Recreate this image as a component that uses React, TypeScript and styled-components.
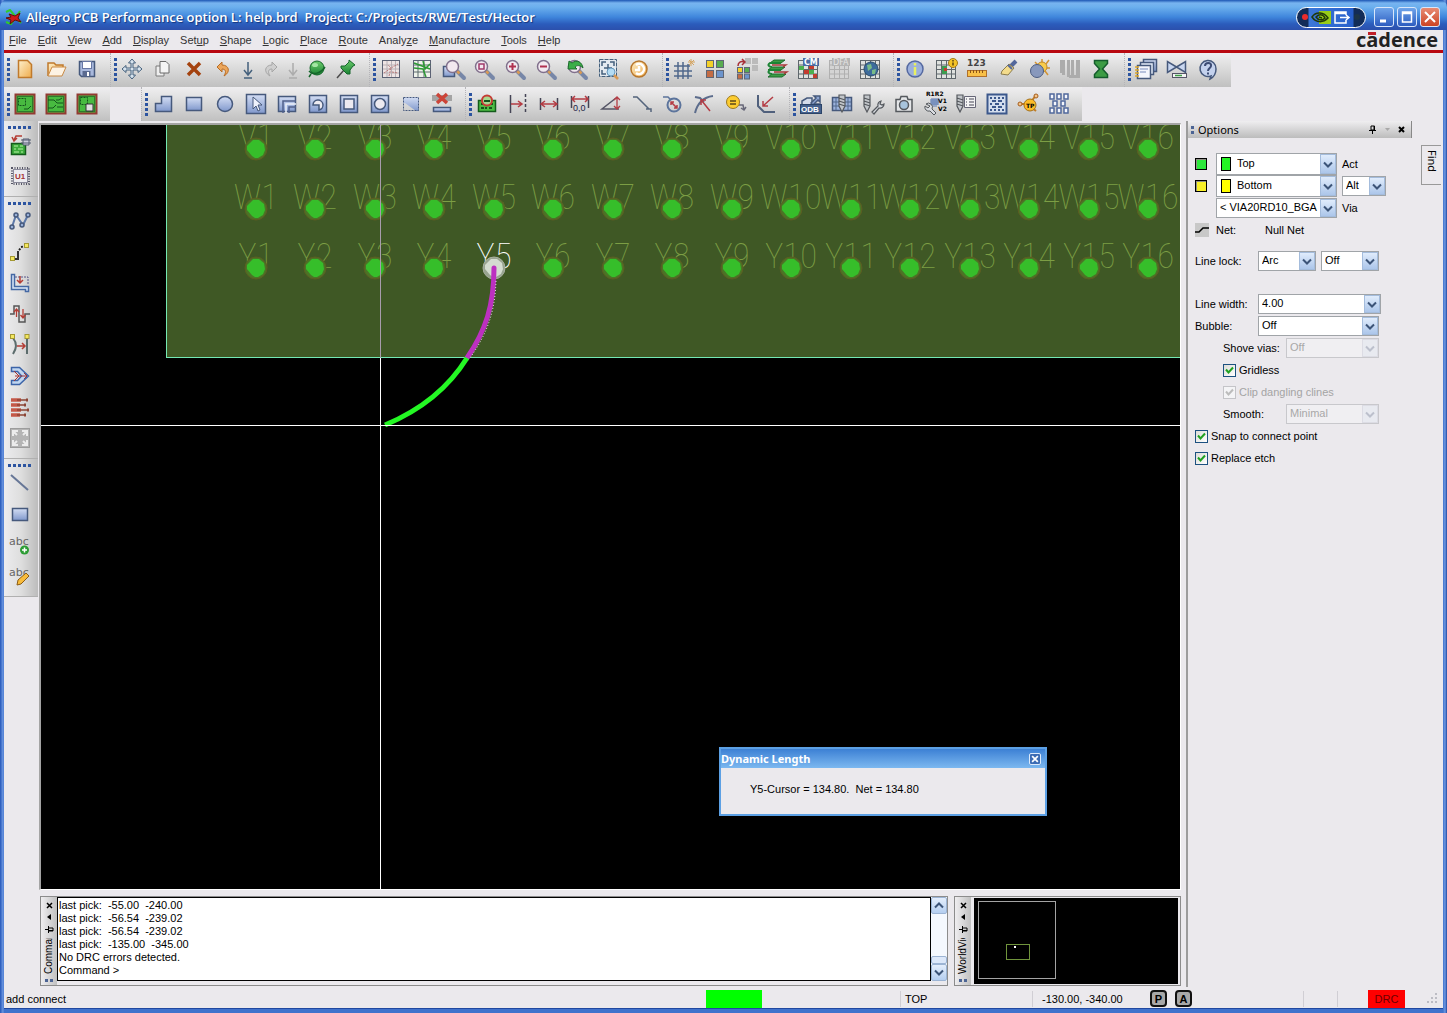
import React from "react";
import styled, { createGlobalStyle } from "styled-components";

const FACE = "#ebe9ed";
const INK = "#46597c";

const GlobalStyle = createGlobalStyle`
  * { box-sizing: border-box; }
  body { margin: 0; background: ${FACE}; font-family: "Liberation Sans", Arial, sans-serif; font-size: 11px; color: #000; }
  button, input, select, textarea { font: inherit; color: inherit; }
`;

/* ---------- icons ---------- */

const SharedPaints = styled.svg`
  display: block;
  width: 0;
  height: 0;
`;

const Glyph = styled.svg`
  display: block;
  width: 22px;
  height: 22px;
  overflow: visible;
`;

const line = (c = INK, w = 1.5) => ({ fill: "none", stroke: c, strokeWidth: w });
const box = (fill = "url(#blue)", c = INK) => ({ fill, stroke: c, strokeWidth: 1.5 });

const Lens = ({ children }: { children?: React.ReactNode }) => (
  <>
    <path d="M13 13l7 7" stroke="#7787a8" strokeWidth="4" strokeLinecap="round" />
    <path d="M13 13l2.500 2.500" stroke="#d99a54" strokeWidth="2.500" />
    <circle cx="8.500" cy="8.500" r="6" fill="#f2e9f0" stroke="#80708c" strokeWidth="1.500" />
    {children}
  </>
);
const Tile = ({ x, y, c, s = 7 }: { x: number; y: number; c: string; s?: number }) => (
  <rect x={x} y={y} width={s} height={s} fill={c} stroke="#5f6675" strokeWidth="1" />
);
const Sheet = ({ c = "#5f676c", bg = "#dfe2df" }: { c?: string; bg?: string }) => (
  <>
    <rect x="1.500" y="2.500" width="19" height="18" fill={bg} stroke={c} />
    <path d="M1.500 7h19M1.500 11.500h19M1.500 16h19M6.500 2v18M11.500 2v18M16.500 2v18" stroke={c} fill="none" />
  </>
);
const Board = ({ children }: { children?: React.ReactNode }) => (
  <>
    <rect x="1.500" y="1.500" width="19" height="19" fill="#48ba40" stroke="#923a32" strokeWidth="2" />
    <rect x="3.500" y="3.500" width="15" height="15" fill="none" stroke="#2c7c2c" />
    {children}
  </>
);
const Drill = ({ x = 8 }: { x?: number }) => (
  <path d={`M${x - 3} 2h6v11l-3 6l-3-6zM${x - 3} 5l6 2m-6 1l6 2m-6 1l6 2`} fill="#c2c6ca" stroke="#55595e" strokeWidth="1.200" />
);
const Wrench = () => (
  <path d="M10 19l6-6a4 4 0 0 1 3-5l-1 3l2 1l2-1a4 4 0 0 1-5 4l-5 6z" fill="#d8dbe0" stroke="#55595e" strokeWidth="1.200" />
);
const Abc = () => (
  <text x="0" y="11" fontSize="11" fill="#666" fontFamily="'DejaVu Sans', sans-serif">abc</text>
);

const ICONS: Record<string, React.ReactNode> = {
  newFile: <path d="M4.500 2.500h9l4 4v13h-13z" {...box("url(#orange)", "#c07a2c")} />,
  open: (
    <>
      <path d="M3 18V5h6l2 2h7v4" {...box("url(#orange)", "#c07a2c")} />
      <path d="M3 18l4-9h14l-4 9z" fill="#fdf3e4" stroke="#c98a45" />
    </>
  ),
  save: (
    <>
      <path d="M3.500 3.500h15v15h-13l-2-2z" {...box("#a8b8dc")} />
      <rect x="6.500" y="3.500" width="9" height="7" fill="#fff" stroke="#6878a4" />
      <rect x="6.500" y="13" width="8" height="5.500" fill="#5a6a90" />
      <rect x="11" y="14" width="2" height="4" fill="#fff" />
    </>
  ),
  move: (
    <path
      d="M11 1l3.500 4h-2.500v5h5V7.500l4 3.500l-4 3.500V12h-5v5h2.500L11 21l-3.500-4H10v-5H5v2.500L1 11l4-3.500V10h5V5H7.500z"
      fill="#d8e4ee" stroke="#44607c" strokeWidth="1"
    />
  ),
  copy: (
    <>
      <path d="M4 8h8v10H4z" fill="#eee" stroke="#7a7a7a" />
      <path d="M8 3.500h6l3 3v8.500H8z" fill="#f4f4f4" stroke="#6a6a6a" />
    </>
  ),
  del: <path d="M5 5l12 12M17 5L5 17" stroke="#a4420f" strokeWidth="3.500" />,
  undo: <path d="M5 9l5-5v3c7 0 9 7 2 11c3-5 1-7-2-7v3z" fill="#eca65a" stroke="#b86c24" />,
  down: <path d="M11 4v12M7 12l4 5l4-5M7 20h8" {...line("#44607c", 1.500)} />,
  redo: <path d="M17 9l-5-5v3c-7 0-9 7-2 11c-3-5-1-7 2-7v3z" fill="#cfcfcf" stroke="#a6a6a6" />,
  downOff: <path d="M11 5v11M7 12l4 5l4-5M7 20h8" {...line("#acacac", 1.500)} />,
  ball: (
    <>
      <circle cx="11" cy="10" r="7" fill="url(#green)" stroke="#14662a" />
      <path d="M3 13c4 5 12 2 16-4M5 16l-2 3" {...line("#14662a", 1.500)} />
      <ellipse cx="9" cy="7" rx="3" ry="2" fill="#a4e6a4" />
    </>
  ),
  pin: (
    <>
      <path d="M2 20l7-8" stroke="#4a4a4a" strokeWidth="1.500" />
      <path d="M14 2l6 5l-2 1l-3 4v4l-3 0l-6-6v-2h4l4-4z" fill="url(#green)" stroke="#14662a" />
    </>
  ),
  ratsOff: (
    <>
      <rect x="2.500" y="2.500" width="17" height="17" fill="#eee4e4" stroke="#5c6274" />
      <path d="M7 3v16M11.500 3v16M15.500 3v16M3 7h16M3 11h16M3 15h16" stroke="#b8b0b4" />
      <path d="M4 15l7-5l-3-3M9 18l2-8l7-4M12 14l6 1" stroke="#b87878" fill="none" strokeDasharray="2 1" />
    </>
  ),
  ratsOn: (
    <>
      <rect x="2.500" y="2.500" width="17" height="17" fill="#eef2ea" stroke="#5c6274" />
      <path d="M7 3v16M13 3v16M3 7h16M3 14h16" stroke="#5c6c6c" />
      <path d="M3 5l16 6M3 10l9 1l3 8M12 3l2 8l5-5" {...line("#2c9a34", 1.500)} />
    </>
  ),
  zoomBox: <><rect x="1.500" y="8.500" width="11" height="10" {...box()} /><g transform="translate(2 0)"><Lens /></g></>,
  zoomFit: <Lens><rect x="6" y="6" width="5" height="5" {...line("#a03a6a")} /></Lens>,
  zoomIn: <Lens><path d="M5 8.500h7M8.500 5v7" stroke="#b03050" strokeWidth="2" /></Lens>,
  zoomOut: <Lens><path d="M5 8.500h7" stroke="#b03050" strokeWidth="2" /></Lens>,
  zoomBack: <Lens><path d="M2 11l1-8l3 2c5-4 10-1 11 5c-3-3-6-3-8-1l2 2z" fill="#3cae48" stroke="#1c6c2c" /></Lens>,
  zoomWorld: (
    <>
      <rect x="2.500" y="1.500" width="17" height="17" fill="#e4eaf0" stroke="#44607c" strokeDasharray="4 1" />
      <path d="M5 8V4h4M13 4h4v4M5 12v4h4M11 6v8M7 10h8" {...line("#44607c")} />
      <circle cx="14" cy="14" r="4" fill="#b4dcf4" stroke="#6898bc" />
      <path d="M17 17l4 4" stroke="#d99a54" strokeWidth="2.500" />
    </>
  ),
  redraw: (
    <>
      <circle cx="11" cy="11" r="8" fill="url(#orange)" stroke="#b8772c" strokeWidth="1.500" />
      <path d="M8 7a5 5 0 1 1 0 8M11 8v4h-4" {...line("#fff", 2.500)} />
    </>
  ),
  grid: (
    <>
      <path d="M5 4v17M10 4v17M15 6v15M1 8h16M1 13h18M1 18h18" {...line("#50688c")} />
      <path d="M18 1v7M15 4h7M16 2l5 5M21 2l-5 5" stroke="#d4a460" strokeWidth="1" />
    </>
  ),
  colors: <><Tile x={2.500} y={2.500} c="#f4d028" /><Tile x={12.500} y={2.500} c="#58ac50" /><Tile x={2.500} y={12.500} c="#c46c44" /><Tile x={12.500} y={12.500} c="#6c94cc" /></>,
  shadow: (
    <>
      <rect x="10" y="0" width="6" height="6" fill="#bbb" /><rect x="17" y="0" width="6" height="6" fill="#bbb" /><rect x="17" y="7" width="6" height="6" fill="#bbb" />
      <Tile x={2.500} y={9.500} c="#f4d028" s={5} /><Tile x={9.500} y={9.500} c="#58ac50" s={5} />
      <Tile x={2.500} y={16} c="#c46c44" s={5} /><Tile x={9.500} y={16} c="#6c94cc" s={5} />
      <path d="M3 8c0-4 3-5 6-4M7 1l3 3l-3 3" {...line("#a83038")} />
    </>
  ),
  layers: (
    <>
      <path d="M2 19l4-3h14l-4 3zM2 12l4-3h13l-4 3zM4 5l4-3h11l-4 3z" fill="#3c9c44" stroke="#1c6c2c" />
      <path d="M15 5H4c-3 2-1 4 2 4M15 12H4c-3 2-1 4 2 4" {...line("#1c8434", 2)} />
      <path d="M6 7h14l-3 2M8 14h13l-3 2" {...line("#a83838", 1.300)} />
    </>
  ),
  cm: (
    <>
      <Sheet />
      <path d="M2 8h5v4H2zM12 12h5v4h-5z" fill="#4cb050" /><path d="M7 12h5v4H7zM16 16h4v4h-4zM12 8h5v3h-5z" fill="#c43c30" />
      <rect x="6" y="0" width="16" height="8" fill="#4c6ca4" />
      <text x="7" y="7" fontSize="8" fontWeight="700" fill="#fff" fontFamily="'DejaVu Sans', sans-serif">CM</text>
    </>
  ),
  dfa: (
    <>
      <Sheet c="#b0b0b0" bg="#d4d4d4" />
      <rect x="4" y="0" width="18" height="8" fill="#b4b4b4" />
      <text x="5" y="7" fontSize="8" fill="#e4e4e4" fontFamily="'DejaVu Sans', sans-serif">DFA</text>
    </>
  ),
  globe: (
    <>
      <Sheet />
      <circle cx="12" cy="11" r="7" fill="#3c6c9c" stroke="#284c6c" />
      <path d="M8 7l4-1l1 4l-4 3zM13 12l4-1l-1 5l-3 0z" fill="#78bc88" />
    </>
  ),
  info: (
    <>
      <circle cx="11" cy="11" r="8" fill="#9cb0dc" stroke="#5468a0" strokeWidth="1.500" />
      <path d="M11 9v8M11 5v2.500" stroke="#e8f060" strokeWidth="2.500" />
    </>
  ),
  sheetInfo: (
    <>
      <Sheet /><path d="M7 8h5v8H7z" fill="#3c9c50" /><path d="M9 10h3v3H9z" fill="#c43c30" />
      <circle cx="18" cy="5" r="4.500" fill="#f4c428" stroke="#a47818" /><path d="M18 4.500v3M18 2v1.500" stroke="#5c4410" strokeWidth="1.500" />
    </>
  ),
  measure: (
    <>
      <text x="1" y="8" fontSize="9" fontWeight="700" fill="#444" fontFamily="'DejaVu Sans', sans-serif">123</text>
      <rect x="1.500" y="12.500" width="19" height="6" fill="#f8c048" stroke="#b0702c" />
      <path d="M4.500 12v3M7.500 12v3M10.500 12v3M13.500 12v3M16.500 12v3" stroke="#8c5418" />
    </>
  ),
  brush: (
    <>
      <path d="M19 3l-6 6" stroke="#54689c" strokeWidth="4" />
      <path d="M12 6l5 4l-6 7l-7-1l1-3z" fill="#f4dc8c" stroke="#8c7c4c" /><path d="M11 7l4 4" stroke="#54689c" strokeWidth="2" />
    </>
  ),
  sun: (
    <>
      <path d="M14 1v4M21 2l-3 4M22 10h-4M20 17l-3-4M7 4l3 3" stroke="#d49434" strokeWidth="1.500" />
      <circle cx="14" cy="9" r="5" fill="#f8cc4c" stroke="#c08828" /><circle cx="9" cy="13" r="6.500" fill="#8898bc" stroke="#4c5c80" />
    </>
  ),
  bars: <path d="M1 2h5v15H3v-2H1zM8 2h3v17H8zM12 2h3v17h-3zM17 2h4v18H10v-3h7z" fill="#acacac" />,
  hourglass: <path d="M4.500 2.500h13v3l-5 5.500l5 5.500v3h-13v-3l5-5.500l-5-5.500z" fill="#3c9c44" stroke="#145c2c" strokeWidth="1.500" />,
  notes: (
    <>
      <rect x="8.500" y="1.500" width="13" height="12" {...box()} /><rect x="5.500" y="4.500" width="13" height="12" {...box("#e4ecf8")} />
      <rect x="2.500" y="7.500" width="13" height="13" {...box("#f4f6fc")} /><path d="M5 11h8M5 14h6" stroke="#788cbc" />
      <path d="M0 9h4M0 12h4M0 15h4M0 18h4" stroke="#e0a828" strokeWidth="1.500" />
    </>
  ),
  script: (
    <>
      <path d="M1.500 3.500v11l9-5.500l9 5.500V3.500L10.500 9z" {...box("#c8d6f0")} />
      <rect x="6.500" y="15.500" width="14" height="4" fill="#f4f4f4" stroke="#556" /><path d="M9 17.500h7" stroke="#3c9c44" strokeWidth="1.500" />
    </>
  ),
  help: (
    <>
      <path d="M14 18a8 8 0 1 1 5-7c0 5-2 8-6 10z" {...box("#c4d2ee")} />
      <path d="M8 8c0-4 7-4 6 0c0 2-3 2-3 5M11 14.500v2" {...line("#3c4c74", 2)} />
    </>
  ),
  board1: <Board><rect x="4.500" y="5.500" width="7" height="7" {...line("#14541c", 1)} strokeDasharray="2 1" /><path d="M10 16h4l3-3" {...line("#14541c", 1)} /></Board>,
  board2: <Board><path d="M3 7h6l3 3h6M3 15h5l3-3M11 7h3l3-2M12 14h6" {...line("#14541c", 1)} /></Board>,
  board3: <Board><rect x="4.500" y="4.500" width="7" height="7" {...line("#14541c", 1)} strokeDasharray="2 1" /><path d="M10 11h7v7h-7z" fill="#e0e0e0" stroke="#333" /></Board>,
  shPoly: <path d="M9.500 3.500h10v15h-16v-8h6z" {...box()} />,
  shRect: <rect x="3.500" y="4.500" width="15" height="13" {...box()} />,
  shCircle: <circle cx="11" cy="11" r="7.500" {...box()} />,
  shSelect: <><rect x="1.500" y="1.500" width="19" height="19" {...box()} /><path d="M8 4v12l3-3l2 5l2-1l-2-5h4z" fill="#eef2fc" stroke={INK} /></>,
  shEdge: <><path d="M2.500 3.500h17v15h-17z" {...box()} /><path d="M7 20V8h13M13 20v-6h7" {...line("#50608c", 1.500)} /><path d="M10 20v-9h10" {...line("#eef2fc", 1.500)} /></>,
  shVoid: <><rect x="2.500" y="2.500" width="17" height="17" {...box()} /><path d="M6 12a5 5 0 1 1 6 5v-5z" {...box("#eceaf0")} /></>,
  shVRect: <><rect x="2.500" y="2.500" width="17" height="17" {...box()} /><rect x="6" y="6" width="10" height="10" {...box("#eceaf0")} /></>,
  shVCircle: <><rect x="2.500" y="2.500" width="17" height="17" {...box()} /><circle cx="11" cy="11" r="5.500" {...box("#eceaf0")} /></>,
  shCorner: <><path d="M3 4h16v14h-3L5 10H3z" fill="url(#blue)" /><rect x="3.500" y="4.500" width="15" height="13" {...line(INK, 1)} strokeDasharray="2 1" /></>,
  shDelete: <><rect x="1" y="2" width="20" height="6" fill="#a4a4a4" /><path d="M6 1l10 9M16 1L6 10" stroke="#cc4438" strokeWidth="3.500" /><rect x="2.500" y="14.500" width="17" height="4" {...box()} /></>,
  drc: <><rect x="2.500" y="7.500" width="17" height="11" fill="#4cbc44" stroke="#145c1c" strokeWidth="1.500" /><path d="M5 15h3M9 15h2M13 15h3M5 11h2M15 11h2" stroke="#14541c" strokeWidth="2" /><circle cx="11" cy="7.500" r="5" fill="#a8d890" stroke="#c43c34" strokeWidth="2" /><path d="M8 8h6" stroke="#14541c" strokeWidth="2" /></>,
  dimA: <><path d="M3.500 2v18" {...line("#445", 1.500)} /><path d="M18.500 1v20" {...line("#445", 1.500)} strokeDasharray="3 2" /><path d="M4 11h11M11 8l4 3l-4 3" {...line("#b43c44", 1.500)} /></>,
  dimB: <><path d="M2.500 5v12M19.500 5v12" {...line("#445", 1.500)} /><path d="M3 11h16M7 8l-4 3l4 3M15 8l4 3l-4 3" {...line("#b43c44", 1.500)} /></>,
  dimC: <><path d="M2.500 3v12M19.500 3v12" {...line("#445", 1.500)} /><path d="M3 6h16M6 3l-3 3l3 3M16 3l3 3l-3 3" {...line("#b43c44", 1.500)} /><text x="4" y="18" fontSize="9" fill="#224" fontFamily="'Liberation Sans', sans-serif">0,0</text></>,
  dimD: <><path d="M19 16H2L16 5" {...line("#556", 1.500)} /><path d="M17 15V4M14 7l3-3l3 3M14 13l3 3l3-3" {...line("#b43c44", 1.300)} /></>,
  dimE: <path d="M2 4h4l12 12h2M15 16h5v3" {...line("#54647c", 1.500)} />,
  dimF: <><circle cx="12" cy="12" r="6.500" {...line("#5c749c", 2)} /><path d="M1 4h5l3 3" {...line("#5c749c", 1.500)} /><path d="M9 9l6 6M9 12V9h3M15 12v3h-3" {...line("#b43c44", 1.500)} /></>,
  dimG: <><path d="M2 20C5 8 12 4 20 3M2 4l5 1l4 4" {...line("#5c6c8c", 2)} /><path d="M17 18L9 8M8 12V7h5" {...line("#b43c44", 1.500)} /></>,
  dimH: <><circle cx="9" cy="9" r="6.500" fill="#fccc30" stroke="#9c7820" /><path d="M6 8h6M6 11h6" stroke="#5c4818" strokeWidth="1.500" /><path d="M15 12h4l1 5M17 15l3 2l2-3" {...line("#667", 1.500)} /></>,
  dimI: <><path d="M3 2v11l6 6h11" {...line("#50607c", 2)} /><path d="M18 4L8 13M8 8v5h5" {...line("#b43c44", 1.500)} /></>,
  odb: (
    <>
      <path d="M2 14V8l5-3h5v6h8v4z" {...box("#d4dcea")} /><path d="M11 10l5-5l-2-2h6v6l-2-2l-5 5z" {...box("#8ca4d0")} />
      <rect x="0.500" y="11.500" width="21" height="9" fill="#44608c" stroke="#2c4468" />
      <text x="1" y="19" fontSize="8" fontWeight="700" fill="#fff" fontFamily="'Liberation Sans', sans-serif">ODB</text>
    </>
  ),
  drillTable: <><rect x="1.500" y="4.500" width="19" height="13" {...box("#9cb2dc")} /><path d="M5 5v12M17 5v12M2 9h18M2 13h18" stroke="#50688c" /><Drill x={11} /></>,
  drillTool: <><Drill x={5} /><Wrench /></>,
  camera: <><path d="M3 6.500h4l1-3h6l1 3h4v12H3z" fill="#e4e6e8" stroke="#55595e" strokeWidth="1.500" /><circle cx="11" cy="12" r="4.500" fill="#a8c4dc" stroke="#55595e" strokeWidth="1.500" /></>,
  renum: (
    <>
      <path d="M6 7h9M6 9h9M6 11h8M8 5v9M10 5v9M12 5v9M14 5v7" stroke="#5878b4" />
      <path d="M2 11a4 4 0 0 1 6 5l4 4l-2 2l-4-4a4 4 0 0 1-5-5l3 2l2-2z" fill="#d8dbe0" stroke="#55595e" />
      <text x="2" y="3" fontSize="6" fontWeight="700" fontFamily="'DejaVu Sans', sans-serif">R1R2</text>
      <text x="14" y="10" fontSize="6" fontWeight="700" fontFamily="'DejaVu Sans', sans-serif">V1</text>
      <text x="14" y="18" fontSize="6" fontWeight="700" fontFamily="'DejaVu Sans', sans-serif">V2</text>
    </>
  ),
  drillList: <><Drill x={5} /><path d="M9.500 3.500h11v11h-11z" fill="#f4f4f4" stroke="#667" /><path d="M11 6h1M14 6h5M11 9h1M14 9h5M11 12h1M14 12h5" stroke="#445" /></>,
  matrix: (
    <>
      <rect x="1.500" y="1.500" width="19" height="19" fill="#d4deee" stroke="#3c588c" strokeWidth="2" />
      <path d="M4 5h2M8 5h2M12 5h2M16 5h2M6 8h4M12 8h4M4 11h2M9 11h4M16 11h2M6 14h4M12 14h4M4 17h2M8 17h2M12 17h2M16 17h2" {...line("#3c588c", 2)} />
    </>
  ),
  testPoint: (
    <>
      <path d="M3 11h5M14 9l5-7M14 14l5 4" {...line("#c07c24", 2)} /><circle cx="3" cy="11" r="2" fill="#f4c488" stroke="#a45c1c" /><circle cx="19" cy="3" r="2" fill="#f4c488" stroke="#a45c1c" />
      <circle cx="13" cy="12" r="6" fill="#fcbc28" stroke="#a4701c" />
      <text x="9" y="15" fontSize="6" fontWeight="700" fontFamily="'DejaVu Sans', sans-serif">TP</text>
    </>
  ),
  array: (
    <g fill="#f4f6fc" stroke="#50689c" strokeWidth="1.500">
      {[[2, 1], [9, 1], [16, 1], [5, 8], [13, 8], [2, 15], [9, 15], [16, 15]].map(([x, y]) => (
        <rect key={`${x}-${y}`} x={x} y={y} width="4" height="5" />
      ))}
    </g>
  ),
  placePart: <><rect x="2.500" y="9.500" width="14" height="11" fill="#3cac3c" stroke="#145c1c" strokeWidth="1.500" /><path d="M5 12h4M11 12h3M5 15h2M9 15h5M5 18h5M12 18h2" {...line("#b4f0a4", 1)} /><path d="M14 5h6v6h-6zM12 6h10M12 9h10" fill="#ccd" stroke="#555c70" /><path d="M13 2H7l-2 4M3 3l2 4l3-3" {...line("#b43c34", 1.500)} /></>,
  component: <><rect x="4.500" y="4.500" width="14" height="13" fill="#ececf0" stroke="#8c8c9c" /><rect x="3" y="3" width="17" height="16" fill="none" stroke="#556" strokeWidth="2" strokeDasharray="1 1.500" /><text x="6" y="14" fontSize="8" fontWeight="700" fill="#a43434" fontFamily="'Liberation Sans', sans-serif">U1</text></>,
  addConnect: <><path d="M3 17L7 5l7 10l5-10" {...line("#5c78a8", 2)} /><g {...box("#98b0d8")}><circle cx="3" cy="17" r="2" /><circle cx="7" cy="5" r="2" /><circle cx="13" cy="15" r="2" /><circle cx="19" cy="5" r="2" /></g></>,
  slide: <><path d="M5 18h4v-8" {...line("#333", 2)} /><path d="M10 9l2-2M12 6l5-1" {...line("#222", 2)} strokeDasharray="2 1.500" /><g fill="#f4e860" stroke="#a49834"><rect x="1.500" y="15.500" width="4" height="4" /><rect x="15.500" y="2.500" width="4" height="4" /></g></>,
  delay: <><path d="M2.500 2.500h3v12h14v5h-3v-2h-14z" {...box("#dce8f8", "#4468a4")} /><path d="M6 5h13v8" {...line("#558", 1)} strokeDasharray="2 1" /><path d="M11 4v7M8 8l3 3l3-3" {...line("#b43c34", 1.500)} /></>,
  phase: <><path d="M1 11h4V3h5v16h6v-8h5" {...line("#555", 1.500)} /><path d="M7.500 14V6M5 9l2.500-3L10 9M14 6v9M11.500 12l2.500 3l2.500-3" {...line("#b43c34", 1.300)} /></>,
  snap: <><path d="M4 4c4 5 4 10 0 16M18 4v16" {...line("#5c6c6c", 2)} /><path d="M8 12h8M13 9l3 3l-3 3" {...line("#b43c34", 1.500)} /><g fill="#f4e860" stroke="#a49834"><rect x="1.500" y="0.500" width="4" height="4" /><rect x="16" y="0.500" width="4" height="4" /></g></>,
  miter: <><path d="M2.500 2.500h8l9 8.500l-9 8.500h-8v-4h6l4-4.500l-4-4.500h-6z" {...box("#c0d6f0", "#3c64a8")} /><path d="M6 11h12M15 8l3 3l-3 3M5 6l5 5l-5 5" {...line("#a43434", 1)} /></>,
  fanout: <><path d="M2 4h10M2 9h9M2 14h10M2 19h9" stroke="#c45848" strokeWidth="3.500" /><path d="M8 4h11M8 9h9M8 14h12M8 19h9" stroke="#8c4434" strokeWidth="1.500" /><path d="M18 2.500v3M16 7.500v3M19 12.500v3M16 17.500v3" stroke="#8c4434" strokeWidth="2" /></>,
  expand: <><rect x="1.500" y="1.500" width="19" height="19" fill="#b4b4b4" stroke="#9c9c9c" /><path d="M4 9V4h5M13 4h5v5M18 13v5h-5M9 18H4v-5M5 5l3 3M17 5l-3 3M17 17l-3-3M5 17l3-3" {...line("#ececec", 2)} /></>,
  addLine: <path d="M2 3l17 15" {...line("#667696", 2)} />,
  addRect: <rect x="3.500" y="5.500" width="15" height="12" {...box()} />,
  addText: <><Abc /><circle cx="15.500" cy="16" r="4.500" fill="#2c9c34" /><path d="M13 16h5M15.500 13.500v5" stroke="#fff" strokeWidth="1.500" /></>,
  editText: <><Abc /><path d="M8 20l1-5l8-7l3 3l-8 8z" fill="#f8bc3c" stroke="#8c5c14" /></>,
};

const Icon = ({ name }: { name: string }) => (
  <Glyph viewBox="0 0 22 22" aria-hidden="true">{ICONS[name]}</Glyph>
);

/* ---------- window frame ---------- */

const Window = styled.div`
  display: flex;
  flex-direction: column;
  height: 100vh;
  min-height: 640px;
  padding: 0 4px 4px;
  background: linear-gradient(90deg, #2456b8 0, #6d98e2 3px, #4072cc 4px, #4072cc calc(100% - 4px), #6d98e2 calc(100% - 2px), #2048a0 100%);
`;

const TitleBar = styled.header`
  flex: none;
  display: flex;
  align-items: center;
  gap: 4px;
  height: 30px;
  margin: 0 -4px;
  padding: 4px 7px 0 5px;
  border-radius: 7px 7px 0 0;
  background: linear-gradient(#1c56b4 0, #78b4f0 3px, #6cb0ee 7px, #3f86dc 17px, #2b5cbc 24px, #2c50ac 100%);
`;

const AppTitle = styled.h1`
  flex: 1;
  margin: 0;
  white-space: pre;
  font: 600 13px/20px "Open Sans", "Noto Sans", sans-serif;
  color: #fff;
  text-shadow: 1px 1px 1px #14347c;
`;

const GpuPill = styled.div`
  display: flex;
  align-items: center;
  justify-content: space-between;
  width: 70px;
  height: 21px;
  margin-right: 5px;
  padding: 0 5px;
  border: 1px solid #fff;
  border-radius: 11px;
  background: linear-gradient(90deg, #122c58 11px, #3c78d8 12px, #2860cc 56px, #122c58 57px);
`;

const Lamp = styled.span<{ $on?: boolean }>`
  width: 6px;
  height: 6px;
  border-radius: 50%;
  background: ${(p) => (p.$on ? "#ec2c2c" : "#1c3448")};
`;

const PillButton = styled.button`
  display: grid;
  padding: 0;
  border: 0;
  background: none;
`;

const FrameButton = styled.button<{ $close?: boolean }>`
  display: grid;
  place-items: center;
  width: 20px;
  height: 20px;
  padding: 0;
  margin-left: -1px;
  border: 1px solid #d8e6fa;
  border-radius: 3px;
  background: ${(p) => (p.$close ? "linear-gradient(#e88c74, #cc4424)" : "linear-gradient(#6ea4ea, #2c5cc0)")};
`;

const MenuBar = styled.nav`
  flex: none;
  display: flex;
  align-items: center;
  gap: 11px;
  height: 23px;
  padding: 0 5px;
  border-bottom: 3px solid #b80810;
  background: ${FACE};
`;

const MenuItem = styled.button`
  padding: 0;
  border: 0;
  background: none;
  color: #333;
  line-height: 16px;
`;

const Brand = styled.span`
  margin-left: auto;
  font: bold 20px/20px "Open Sans", "Noto Sans", sans-serif;
  color: #222;
`;

const BrandA = styled.span`
  position: relative;
  &::after {
    content: "";
    position: absolute;
    left: 2px;
    top: 6px;
    width: 8px;
    height: 3px;
    background: #c02028;
  }
`;

/* ---------- toolbars ---------- */

const ToolRow = styled.div`
  flex: none;
  display: flex;
  height: 34px;
  background: ${FACE};
`;

const ToolGroup = styled.div<{ $first?: boolean; $gap?: boolean; $low?: boolean }>`
  display: flex;
  align-items: center;
  padding: ${(p) => (p.$low ? "0" : "0 0 2px")};
  padding-left: 5px;
  padding-right: 8px;
  margin-left: ${(p) => (p.$gap ? "31px" : "0")};
  border-left: ${(p) => (p.$first ? "0" : "1px dotted #b4b4b8")};
  background: linear-gradient(#efeef0 0, #e2e2e2 30%, #c0c0c0 100%);
`;

const Grip = styled.span<{ $flat?: boolean }>`
  flex: none;
  width: ${(p) => (p.$flat ? "24px" : "3px")};
  height: ${(p) => (p.$flat ? "3px" : "23px")};
  margin: ${(p) => (p.$flat ? "3px 0 0" : "0 -1px 0 -2px")};
  background: repeating-linear-gradient(${(p) => (p.$flat ? "90deg" : "180deg")}, #2c54a0 0 3px, transparent 3px 5px);
`;

const ToolButton = styled.button<{ $w: number }>`
  display: grid;
  place-items: center;
  width: ${(p) => p.$w}px;
  height: 31px;
  padding: 0;
  border: 0;
  background: none;
`;

const Work = styled.div`
  flex: 1;
  min-height: 0;
  display: flex;
  background: ${FACE};
`;

const SideTools = styled.div`
  flex: none;
  width: 34px;
`;

const SideGroup = styled.div`
  display: flex;
  flex-direction: column;
  align-items: center;
  padding: 2px 2px 5px 0;
  border-bottom: 1px solid #b0b0b0;
  background: linear-gradient(90deg, #ececee 0, #dedede 50%, #bcbcbc 100%);
`;

/* ---------- design canvas ---------- */

const Center = styled.main`
  flex: 1;
  min-width: 0;
  display: flex;
  flex-direction: column;
  padding: 2px 5px 1px 1px;
`;

const Canvas = styled.section`
  position: relative;
  flex: 1;
  min-height: 0;
  overflow: hidden;
  border: 2px solid #a4a4a4;
  border-bottom: 1px solid #fff;
  border-right: 1px solid #fff;
  background: #000;
`;

const Drawing = styled.svg`
  display: block;
  width: 100%;
  height: 100%;
`;

const PinName = styled.text<{ $lit?: boolean }>`
  font: 100 35px "Roboto Condensed", "Roboto", sans-serif;
  text-anchor: middle;
  fill: ${(p) => (p.$lit ? "#fff" : "#7c9e44")};
`;

const LengthDialog = styled.section`
  position: absolute;
  left: 678px;
  top: 622px;
  width: 328px;
  border: 2px solid #5ca0e4;
  background: ${FACE};
`;

const DialogTitle = styled.h2`
  display: flex;
  align-items: center;
  justify-content: space-between;
  height: 19px;
  margin: 0;
  padding-right: 4px;
  font: bold 11px/18px "Noto Sans", sans-serif;
  color: #fff;
  background: linear-gradient(#3c80d4, #7cb8f0);
`;

const DialogClose = styled.button`
  display: grid;
  place-items: center;
  width: 12px;
  height: 12px;
  padding: 0;
  border: 1px solid #dceafc;
  border-radius: 2px;
  background: #3c6cb4;
`;

const DialogText = styled.p`
  margin: 0;
  padding: 15px 29px 18px;
  line-height: 13px;
  white-space: pre;
`;

/* ---------- docked panes ---------- */

const Docks = styled.div`
  flex: none;
  display: flex;
  gap: 6px;
  height: 90px;
  margin: 6px 0 0 1px;
`;

const Dock = styled.section<{ $w?: number }>`
  display: flex;
  flex: ${(p) => (p.$w ? `0 0 ${p.$w}px` : "1")};
  min-width: 0;
  border: 1px solid #8c8c8c;
`;

const DockHandle = styled.div`
  flex: none;
  display: flex;
  flex-direction: column;
  align-items: center;
  justify-content: space-between;
  width: 16px;
  padding: 5px 0 3px;
  background: linear-gradient(90deg, #efeef0, #c0c0c0);
`;

const TinyButton = styled.button`
  display: grid;
  place-items: center;
  padding: 0;
  border: 0;
  background: none;
`;

const DockName = styled.span`
  height: 36px;
  overflow: hidden;
  writing-mode: vertical-rl;
  transform: rotate(180deg);
  font-size: 10px;
  line-height: 12px;
`;

const Dots = styled.span`
  width: 8px;
  height: 3px;
  background: repeating-linear-gradient(90deg, #4c6494 0 3px, transparent 3px 5px);
`;

const LogText = styled.textarea`
  flex: 1;
  min-width: 0;
  height: 84px;
  margin: 0;
  padding: 1px;
  resize: none;
  overflow: hidden;
  border: 1px solid #000;
  outline: 0;
  line-height: 13px;
  background: #fff;
`;

const ScrollTrack = styled.div`
  display: flex;
  flex-direction: column;
  width: 16px;
  height: 84px;
  background: #f4f8fe;
`;

const ScrollButton = styled.button`
  display: grid;
  place-items: center;
  height: 17px;
  padding: 0;
  border: 1px solid #9cb4d4;
  border-radius: 2px;
  background: linear-gradient(#e4eefc, #b4cef0);
`;

const ScrollThumb = styled.span`
  height: 8px;
  margin-top: auto;
  border: 1px solid #9cb4d4;
  border-radius: 2px;
  background: #dce8fa;
`;

const WorldMap = styled.div`
  flex: 1;
  margin: 1px 2px 1px 3px;
  background: #000;
`;

/* ---------- options panel ---------- */

const OptionsPanel = styled.aside`
  flex: none;
  display: flex;
  align-items: flex-start;
  width: 257px;
`;

const OptionsBody = styled.div`
  width: 226px;
  height: 100%;
  border-left: 2px solid #9c9c9c;
`;

const OptionsTitle = styled.h2`
  display: flex;
  align-items: center;
  gap: 8px;
  height: 17px;
  margin: 0 0 15px;
  padding: 0 6px 0 3px;
  border-right: 1px solid #888;
  font: 11px/15px "Noto Sans", sans-serif;
  background: linear-gradient(#efeef0, #bcbcbc);
`;

const TitleLabel = styled.span`
  flex: 1;
  margin-left: -4px;
`;

const SideDots = styled.span`
  width: 3px;
  height: 8px;
  background: repeating-linear-gradient(#4c6494 0 3px, transparent 3px 5px);
`;

const FindTab = styled.button`
  width: 20px;
  height: 40px;
  margin: 24px 0 0 9px;
  padding: 4px 2px;
  border: 1px solid #999;
  border-right: 0;
  background: ${FACE};
  writing-mode: vertical-rl;
  text-align: left;
  font-family: "Noto Sans", sans-serif;
  line-height: 12px;
`;

const Row = styled.div<{ $indent?: number; $top?: number }>`
  display: flex;
  align-items: center;
  height: 22px;
  margin-top: ${(p) => p.$top ?? 0}px;
  padding-left: ${(p) => p.$indent ?? 7}px;
`;

const Caption = styled.label<{ $w?: number; $off?: boolean }>`
  width: ${(p) => (p.$w ? `${p.$w}px` : "auto")};
  white-space: nowrap;
  color: ${(p) => (p.$off ? "#a4a4a4" : "#000")};
`;

const Combo = styled.span<{ $w: number; $gap?: number; $tall?: boolean }>`
  flex: none;
  display: grid;
  width: ${(p) => p.$w}px;
  height: ${(p) => (p.$tall ? 22 : 20)}px;
  margin-right: ${(p) => p.$gap ?? 5}px;
  align-items: center;
  > * { grid-area: 1 / 1; }
`;

const Field = styled.select<{ $pad?: number }>`
  appearance: none;
  width: 100%;
  height: 100%;
  padding: 0 0 2px ${(p) => p.$pad ?? 3}px;
  border: 1px solid #a0a4a8;
  border-radius: 0;
  background: #fff;
  opacity: 1;
  &:disabled { color: #a8a8a8; background: #f0eff2; border-color: #c8c8cc; }
`;

const Entry = styled.input`
  width: 100%;
  height: 100%;
  padding: 0 0 2px 3px;
  border: 1px solid #a0a4a8;
  background: #fff;
`;

const Arrow = styled.span<{ $off?: boolean }>`
  justify-self: end;
  display: grid;
  place-items: center;
  width: 16px;
  height: calc(100% - 2px);
  margin-right: 1px;
  border: 1px solid ${(p) => (p.$off ? "#dcdce4" : "#a4bcdc")};
  background: ${(p) => (p.$off ? "#e8eaf0" : "linear-gradient(#e0ecfc, #acc6ea)")};
  pointer-events: none;
`;

const Swatch = styled.span<{ $c: string }>`
  width: 10px;
  height: 14px;
  margin-left: 5px;
  border: 1px solid #000;
  background: ${(p) => p.$c};
  pointer-events: none;
`;

const LayerToggle = styled.button<{ $c: string }>`
  width: 12px;
  height: 12px;
  margin-right: 9px;
  padding: 0;
  border: 1px solid #000;
  box-shadow: inset 1px 1px 0 0 #909088;
  background: ${(p) => p.$c};
`;

const NetMark = styled.span`
  display: grid;
  width: 14px;
  height: 14px;
  margin-right: 7px;
  background: #c8c8c8;
`;

const TickHolder = styled.span`
  display: grid;
  width: 13px;
  height: 13px;
  margin-right: 3px;
  > * { grid-area: 1 / 1; }
`;

const TickInput = styled.input`
  appearance: none;
  width: 13px;
  height: 13px;
  margin: 0;
  border: 1px solid #1c5180;
  background: linear-gradient(135deg, #dcdcd7, #fff);
  &:disabled { border-color: #c4c4c8; background: #f4f4f6; }
`;

const TickMark = styled.svg`
  width: 13px;
  height: 13px;
  pointer-events: none;
`;

/* ---------- status bar ---------- */

const StatusBar = styled.footer`
  flex: none;
  display: grid;
  grid-template-columns: 1fr 56px 138px 132px 118px 25px 128px 34px 31px 37px 18px 19px;
  align-items: center;
  height: 22px;
  padding: 2px 1px 0 2px;
  background: ${FACE};
  border-bottom: 1px solid #2048a0;
  line-height: 18px;
`;

const StatusCell = styled.span<{ $pad?: number; $line?: boolean }>`
  height: 16px;
  line-height: 16px;
  padding-left: ${(p) => p.$pad ?? 0}px;
  border-left: ${(p) => (p.$line ? "1px solid #d0ced4" : "0")};
`;

const Busy = styled.span`
  height: 18px;
  background: #00ff00;
`;

const DrcFlag = styled.span`
  height: 18px;
  background: #ff0000;
  color: #6c0000;
  text-align: center;
`;

const KeyButton = styled.button`
  width: 17px;
  height: 17px;
  padding: 0;
  border: 2px solid #111;
  border-radius: 4px;
  background: #a8a8a8;
  font-weight: bold;
  line-height: 12px;
`;

/* ---------- data ---------- */

type Tool = [icon: string, label: string, width?: number];

const topGroups: Tool[][] = [
  [["newFile", "New"], ["open", "Open"], ["save", "Save"]],
  [["move", "Move"], ["copy", "Copy"], ["del", "Delete"], ["undo", "Undo", 27], ["down", "Undo list", 23], ["redo", "Redo", 23], ["downOff", "Redo list", 21], ["ball", "Unfix", 27], ["pin", "Fix"]],
  [["ratsOff", "Unrats all"], ["ratsOn", "Rats all"], ["zoomBox", "Zoom points"], ["zoomFit", "Zoom fit"], ["zoomIn", "Zoom in"], ["zoomOut", "Zoom out"], ["zoomBack", "Zoom previous"], ["zoomWorld", "Zoom world"], ["redraw", "Redraw"]],
  [["grid", "Grid toggle"], ["colors", "Color"], ["shadow", "Shadow toggle"], ["layers", "Cross section"], ["cm", "Constraint manager"], ["dfa", "DFA"], ["globe", "Net properties"]],
  [["info", "Show element"], ["sheetInfo", "Show constraints"], ["measure", "Measure"], ["brush", "Highlight"], ["sun", "Dehighlight"], ["bars", "Waive"], ["hourglass", "Datatips"]],
  [["notes", "Reports"], ["script", "Script"], ["help", "Help"]],
];

const shapeGroups: Tool[][] = [
  [["board1", "General edit"], ["board2", "Etch edit"], ["board3", "Placement edit"]],
  [["shPoly", "Shape polygon"], ["shRect", "Shape rectangle"], ["shCircle", "Shape circle"], ["shSelect", "Shape select"], ["shEdge", "Edit boundary"], ["shVoid", "Void polygon"], ["shVRect", "Void rectangle"], ["shVCircle", "Void circle"], ["shCorner", "Void element"], ["shDelete", "Delete islands"]],
  [["drc", "Dimension environment"], ["dimA", "Datum dimension"], ["dimB", "Linear dimension"], ["dimC", "Ordinate dimension"], ["dimD", "Angular dimension"], ["dimE", "Leader"], ["dimF", "Diametral leader"], ["dimG", "Radial leader"], ["dimH", "Balloon leader"], ["dimI", "Chamfer leader"]],
  [["odb", "ODB out"], ["drillTable", "Drill legend"], ["drillTool", "Drill customize"], ["camera", "Artwork"], ["renum", "Auto rename"], ["drillList", "NC drill"], ["matrix", "Thieving"], ["testPoint", "Test prep"], ["array", "Panelize"]],
];

const sideGroups: Tool[][] = [
  [["placePart", "Place manual"], ["component", "Quickplace"]],
  [["addConnect", "Add connect"], ["slide", "Slide"], ["delay", "Delay tune"], ["phase", "Phase tune"], ["snap", "Custom smooth"], ["miter", "Miter"], ["fanout", "Create fanout"], ["expand", "Spread"]],
  [["addLine", "Add line"], ["addRect", "Add rectangle"], ["addText", "Add text"], ["editText", "Edit text"]],
];

/* each menu is split around its access key */
const menus: [string, string, string][] = [
  ["", "F", "ile"], ["", "E", "dit"], ["", "V", "iew"], ["", "A", "dd"], ["", "D", "isplay"], ["Set", "u", "p"], ["", "S", "hape"],
  ["", "L", "ogic"], ["", "P", "lace"], ["", "R", "oute"], ["Analy", "z", "e"], ["", "M", "anufacture"], ["", "T", "ools"], ["", "H", "elp"],
];

const pinRows = [
  { letter: "V", y: 24 },
  { letter: "W", y: 84 },
  { letter: "Y", y: 143 },
];
const pinColumns = Array.from({ length: 16 }, (_, i) => ({ n: i + 1, x: Math.round(215 + i * 59.47) }));

const log = [
  "last pick:  -55.00  -240.00",
  "last pick:  -56.54  -239.02",
  "last pick:  -56.54  -239.02",
  "last pick:  -135.00  -345.00",
  "No DRC errors detected.",
  "Command >",
].join("\n");

/* ---------- parts ---------- */

const Tools = ({ items }: { items: Tool[] }) => (
  <>
    {items.map(([icon, label, width]) => (
      <ToolButton key={icon} $w={width ?? 31} title={label} aria-label={label}>
        <Icon name={icon} />
      </ToolButton>
    ))}
  </>
);

const Chevron = ({ up, c = "#3c5478" }: { up?: boolean; c?: string }) => (
  <svg width="10" height="7" viewBox="0 0 10 7" aria-hidden="true">
    <path d={up ? "M1 5.500l4-4l4 4" : "M1 1.500l4 4l4-4"} fill="none" stroke={c} strokeWidth="2" />
  </svg>
);

const Cross = ({ s = 7, c = "#000", w = 1.500 }: { s?: number; c?: string; w?: number }) => (
  <svg width={s} height={s} viewBox="0 0 7 7" aria-hidden="true">
    <path d="M1 1l5 5M6 1L1 6" stroke={c} strokeWidth={w} />
  </svg>
);

const PushPin = () => (
  <svg width="9" height="9" viewBox="0 0 9 9" aria-hidden="true">
    <path d="M3 1h3.500v4H3zM1 5.500h7M4.500 6v3M6 1v4" fill="none" stroke="#000" />
  </svg>
);

const SidePin = () => (
  <svg width="9" height="9" viewBox="0 0 9 9" aria-hidden="true">
    <path d="M0 4.500h3.500M3.500 1v7M4 3h4v3H4M4 5.500h4" fill="none" stroke="#000" />
  </svg>
);

interface DropProps { id: string; value: string; w: number; gap?: number; off?: boolean; swatch?: string; tall?: boolean; label?: string }

const Drop = ({ id, value, w, gap, off, swatch, tall, label }: DropProps) => (
  <Combo $w={w} $gap={gap} $tall={tall}>
    <Field id={id} aria-label={label} disabled={off} $pad={swatch ? 20 : 3} defaultValue={value}>
      <option>{value}</option>
    </Field>
    {swatch && <Swatch $c={swatch} />}
    <Arrow $off={off}><Chevron c={off ? "#bcc0cc" : undefined} /></Arrow>
  </Combo>
);

const Tick = ({ id, children, off, indent }: { id: string; children: string; off?: boolean; indent?: number }) => (
  <Row $indent={indent}>
    <TickHolder>
      <TickInput type="checkbox" id={id} defaultChecked disabled={off} />
      <TickMark viewBox="0 0 13 13" aria-hidden="true">
        <path d="M3 5.500l2.500 3l4.500-5" fill="none" stroke={off ? "#bcbcbc" : "#21a121"} strokeWidth="2" />
      </TickMark>
    </TickHolder>
    <Caption htmlFor={id} $off={off}>{children}</Caption>
  </Row>
);

const Paints = () => (
  <SharedPaints aria-hidden="true">
    <defs>
      <linearGradient id="blue" x1="0" y1="0" x2="0" y2="1"><stop offset="0" stopColor="#d4def4" /><stop offset="1" stopColor="#8098cc" /></linearGradient>
      <linearGradient id="orange" x1="0" y1="0" x2="1" y2="1"><stop offset="0" stopColor="#fdf0cc" /><stop offset="1" stopColor="#f0ac4c" /></linearGradient>
      <linearGradient id="green" x1="0" y1="0" x2="0" y2="1"><stop offset="0" stopColor="#6ccc6c" /><stop offset="1" stopColor="#1c8434" /></linearGradient>
    </defs>
  </SharedPaints>
);

const Pad = ({ x, y, lit }: { x: number; y: number; lit?: boolean }) => (
  <g transform={`translate(${x} ${y})`}>
    <circle r="11" fill={lit ? "#98a490" : "#4b7426"} stroke={lit ? "#a8b0a0" : "#5c5c22"} />
    <path d="M-3-9h6l5 4l1 6l-2 5l-5 3h-3l-3-2l-5-6v-4z" fill={lit ? "#d4dcd0" : "#36be2a"} />
  </g>
);

const Layout = () => (
  <Drawing role="img" aria-label="Board layout">
    <rect x="125.5" y="-1" width="100%" height="233.500" fill="#3f5825" stroke="#74e8b4" />
    {pinRows.map((row) =>
      pinColumns.map(({ n, x }) => {
        const lit = row.letter === "Y" && n === 5;
        return (
          <g key={`${row.letter}${n}`}>
            <PinName x={x} y={row.y} $lit={lit}>{`${row.letter}${n}`}</PinName>
            <Pad x={x} y={row.y} lit={lit} />
          </g>
        );
      }),
    )}
    <path d="M453 143C453 180 445 205 426 233" fill="none" stroke="#bc30c0" strokeWidth="5" strokeLinecap="round" />
    <path d="M455 156C454 187 446 209 429 233" fill="none" stroke="#e8d8e8" strokeDasharray="1 2" />
    <path d="M426 233C408 262 380 285 344 300" fill="none" stroke="#24f824" strokeWidth="5" />
    <path d="M339.500 0V233" stroke="#a89cac" />
    <path d="M339.500 233V2000M0 300.500H4000" stroke="#fff" />
  </Drawing>
);

export default function App() {
  return (
    <Window>
      <GlobalStyle />
      <Paints />
      <TitleBar>
        <svg width="17" height="17" viewBox="0 0 17 17" aria-hidden="true">
          <path d="M1 3l4-2l11 13M1 13l5 2l9-13" stroke="#30cc30" strokeWidth="2" fill="none" />
          <path d="M1 9l5-1l-2-3l6 2l5-3l-2 5l3 4l-6-2l-5 4l1-4z" fill="#d01818" stroke="#601008" />
        </svg>
        <AppTitle>{"Allegro PCB Performance option L: help.brd  Project: C:/Projects/RWE/Test/Hector"}</AppTitle>
        <GpuPill>
          <Lamp $on />
          <PillButton aria-label="Graphics settings">
            <svg width="20" height="13" viewBox="0 0 20 13"><rect x="8" width="12" height="13" fill="#98cc18" /><path d="M1 6c4-6 12-5 16 1c-5 5-12 5-16-1zM5 6c3-3 7-3 9 1c-3 3-7 2-9-1zM8 6l3 1" fill="none" stroke="#203808" strokeWidth="1.500" /></svg>
          </PillButton>
          <PillButton aria-label="Send to display">
            <svg width="17" height="13" viewBox="0 0 17 13"><path d="M12 4V1H1v11h11V9M1 2.500h11M6 6.500h9M12 4l3 2.500l-3 2.500" fill="none" stroke="#fff" strokeWidth="1.500" /></svg>
          </PillButton>
          <Lamp />
        </GpuPill>
        <FrameButton aria-label="Minimize"><svg width="12" height="12"><path d="M2 10h6" stroke="#fff" strokeWidth="3" /></svg></FrameButton>
        <FrameButton aria-label="Maximize"><svg width="12" height="12"><path d="M1.500 1h9v10h-9zM1 2.500h10" fill="none" stroke="#fff" strokeWidth="1.500" /></svg></FrameButton>
        <FrameButton $close aria-label="Close"><Cross s={14} c="#fff" w={1} /></FrameButton>
      </TitleBar>

      <MenuBar>
        {menus.map(([before, key, after]) => (
          <MenuItem key={before + key + after}>{before}<u>{key}</u>{after}</MenuItem>
        ))}
        <Brand>c<BrandA>ā</BrandA>dence</Brand>
      </MenuBar>

      <ToolRow>
        {topGroups.map((items, i) => (
          <ToolGroup key={i} $first={i === 0}><Grip /><Tools items={items} /></ToolGroup>
        ))}
      </ToolRow>
      <ToolRow>
        {shapeGroups.map((items, i) => (
          <ToolGroup key={i} $low $first={i === 0} $gap={i === 1}><Grip /><Tools items={items} /></ToolGroup>
        ))}
      </ToolRow>

      <Work>
        <SideTools>
          {sideGroups.map((items, i) => (
            <SideGroup key={i}><Grip $flat /><Tools items={items} /></SideGroup>
          ))}
        </SideTools>

        <Center>
          <Canvas>
            <Layout />
            <LengthDialog>
              <DialogTitle>Dynamic Length<DialogClose aria-label="Close"><Cross s={8} c="#fff" /></DialogClose></DialogTitle>
              <DialogText>{"Y5-Cursor = 134.80.  Net = 134.80"}</DialogText>
            </LengthDialog>
          </Canvas>

          <Docks>
            <Dock>
              <DockHandle>
                <TinyButton aria-label="Close"><Cross /></TinyButton>
                <TinyButton aria-label="Collapse"><svg width="4" height="6"><path d="M4 0v6L0 3z" /></svg></TinyButton>
                <TinyButton aria-label="Pin"><SidePin /></TinyButton>
                <DockName>Command</DockName>
                <Dots />
              </DockHandle>
              <LogText readOnly aria-label="Command" value={log} />
              <ScrollTrack>
                <ScrollButton aria-label="Scroll up"><Chevron up /></ScrollButton>
                <ScrollThumb />
                <ScrollButton aria-label="Scroll down"><Chevron /></ScrollButton>
              </ScrollTrack>
            </Dock>
            <Dock $w={227}>
              <DockHandle>
                <TinyButton aria-label="Close"><Cross /></TinyButton>
                <TinyButton aria-label="Collapse"><svg width="4" height="6"><path d="M4 0v6L0 3z" /></svg></TinyButton>
                <TinyButton aria-label="Pin"><SidePin /></TinyButton>
                <DockName>WorldView</DockName>
                <Dots />
              </DockHandle>
              <WorldMap>
                <Drawing role="img" aria-label="World view">
                  <rect x="4.5" y="3.5" width="77" height="77" fill="none" stroke="#a4a4a4" />
                  <rect x="32.5" y="46.5" width="23" height="15" fill="none" stroke="#70943c" />
                  <rect x="40" y="48" width="2" height="2" fill="#fff" />
                </Drawing>
              </WorldMap>
            </Dock>
          </Docks>
        </Center>

        <OptionsPanel>
          <OptionsBody>
            <OptionsTitle>
              <SideDots />
              <TitleLabel>Options</TitleLabel>
              <TinyButton aria-label="Pin"><PushPin /></TinyButton>
              <TinyButton aria-label="Menu"><svg width="5" height="3"><path d="M0 0h5L2.500 3z" fill="#a8a8a8" /></svg></TinyButton>
              <TinyButton aria-label="Close"><Cross w={2} /></TinyButton>
            </OptionsTitle>
            <Row>
              <LayerToggle $c="#2ce83c" aria-label="Show top layer" />
              <Drop id="act" value="Top" w={121} swatch="#24f424" tall />
              <Caption htmlFor="act">Act</Caption>
            </Row>
            <Row>
              <LayerToggle $c="#f8f028" aria-label="Show bottom layer" />
              <Drop id="alt" value="Bottom" w={121} swatch="#ffff00" tall label="Alternate layer" />
              <Drop id="side" value="Alt" w={44} label="Side" />
            </Row>
            <Row $indent={28}>
              <Drop id="via" value="< VIA20RD10_BGA" w={121} />
              <Caption htmlFor="via">Via</Caption>
            </Row>
            <Row>
              <NetMark><svg width="14" height="14"><path d="M0 9h4l4-4h6" fill="none" stroke="#000" strokeWidth="1.500" /></svg></NetMark>
              <Caption as="span" $w={49}>Net:</Caption>
              <span>Null Net</span>
            </Row>
            <Row $top={9}>
              <Caption htmlFor="lock" $w={63}>Line lock:</Caption>
              <Drop id="lock" value="Arc" w={58} />
              <Drop id="angle" value="Off" w={58} label="Lock angle" />
            </Row>
            <Row $top={21}>
              <Caption htmlFor="width" $w={63}>Line width:</Caption>
              <Combo $w={123}>
                <Entry id="width" defaultValue="4.00" />
                <Arrow><Chevron /></Arrow>
              </Combo>
            </Row>
            <Row>
              <Caption htmlFor="bubble" $w={63}>Bubble:</Caption>
              <Drop id="bubble" value="Off" w={121} />
            </Row>
            <Row $indent={35}>
              <Caption htmlFor="shove" $w={63}>Shove vias:</Caption>
              <Drop id="shove" value="Off" w={93} off />
            </Row>
            <Tick id="gridless" indent={35}>Gridless</Tick>
            <Tick id="clip" indent={35} off>Clip dangling clines</Tick>
            <Row $indent={35}>
              <Caption htmlFor="smooth" $w={63}>Smooth:</Caption>
              <Drop id="smooth" value="Minimal" w={93} off />
            </Row>
            <Tick id="snap">Snap to connect point</Tick>
            <Tick id="replace">Replace etch</Tick>
          </OptionsBody>
          <FindTab>Find</FindTab>
        </OptionsPanel>
      </Work>

      <StatusBar>
        <StatusCell>add connect</StatusCell>
        <Busy />
        <StatusCell />
        <StatusCell $pad={4} $line>TOP</StatusCell>
        <StatusCell $pad={9} $line>-130.00, -340.00</StatusCell>
        <KeyButton>P</KeyButton>
        <KeyButton>A</KeyButton>
        <StatusCell $line />
        <StatusCell $line />
        <DrcFlag>DRC</DrcFlag>
        <StatusCell />
        <svg width="14" height="14" aria-hidden="true"><path d="M12 2h2M8 6h6M4 10h10" stroke="#bcbcc4" strokeWidth="2" strokeDasharray="2 2" /></svg>
      </StatusBar>
    </Window>
  );
}
